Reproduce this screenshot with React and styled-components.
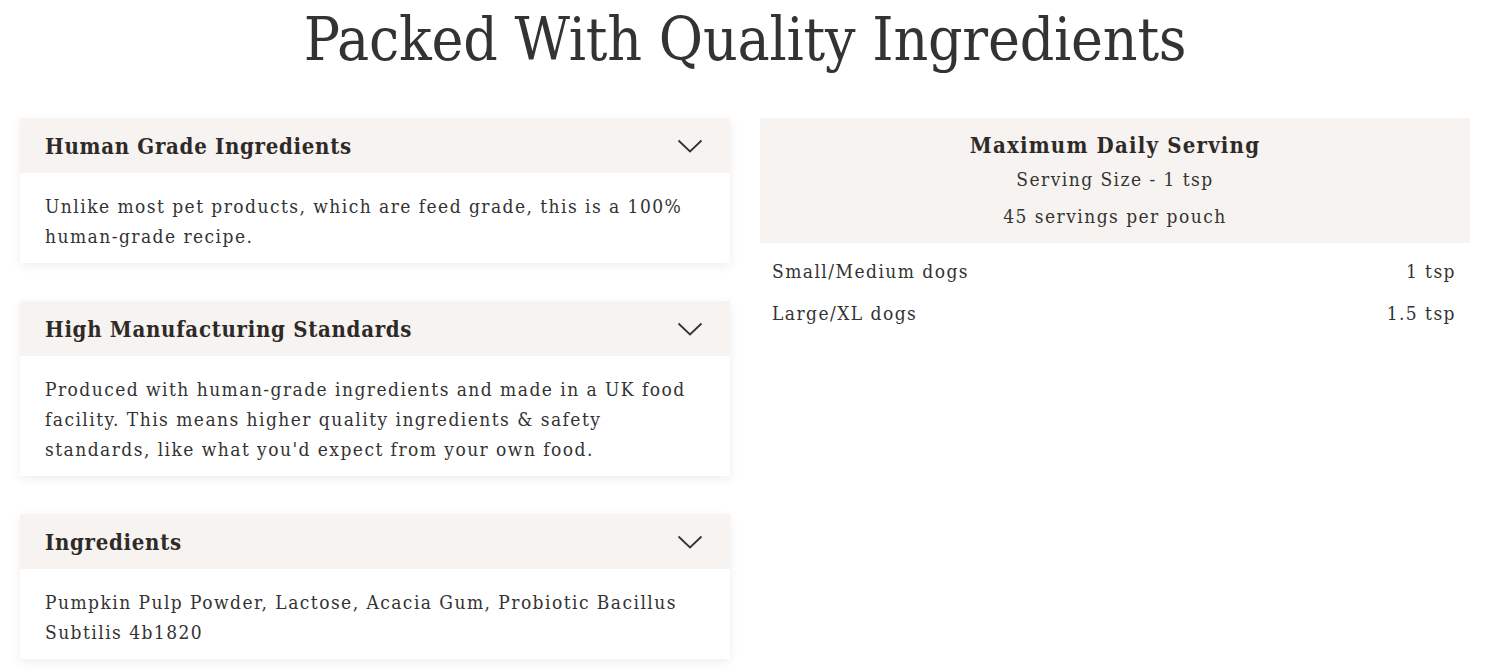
import React from "react";
import styled, { createGlobalStyle } from "styled-components";

const GlobalStyle = createGlobalStyle`
    body {
        margin: 0;
        background: #fff;
        font-family: "DejaVu Serif Condensed", "DejaVu Serif", serif;
        color: #333;
    }
`;

const Page = styled.div`
    width: 1501px;
    padding: 0 31px 20px 20px;
    box-sizing: border-box;
`;

const Heading = styled.h1`
    margin: 0;
    padding-top: 3px;
    height: 118px;
    box-sizing: border-box;
    text-align: center;
    font-size: 60px;
    font-weight: 400;
    letter-spacing: -0.2px;
    line-height: 72px;
    color: #333;
`;

const Columns = styled.div`
    display: grid;
    grid-template-columns: 710px 710px;
    column-gap: 30px;
    align-items: start;
`;

const Stack = styled.div`
    display: flex;
    flex-direction: column;
    gap: 38px;
`;

const Card = styled.div`
    background: #fff;
    box-shadow: 0 3px 10px rgba(0, 0, 0, 0.07);
`;

const CardHeader = styled.div`
    height: 55px;
    background: #f7f3f0;
    display: flex;
    align-items: center;
    justify-content: space-between;
    padding: 0 27px 0 25px;
`;

const CardTitle = styled.h3`
    margin: 0;
    font-size: 22px;
    font-weight: 700;
    letter-spacing: 0.7px;
    color: #2e2a28;
`;

const CardBody = styled.p`
    margin: 0;
    padding: 18px 25px 12px;
    font-size: 19px;
    line-height: 30px;
    letter-spacing: 1.45px;
    color: #333;
`;

const Chevron = () => (
    <svg width="26" height="14" viewBox="0 0 26 14" fill="none">
        <path d="M1.5 1.5 L13 12.5 L24.5 1.5" stroke="#333" strokeWidth="1.8" />
    </svg>
);

const ServingPanel = styled.div`
    display: flex;
    flex-direction: column;
`;

const ServingHead = styled.div`
    background: #f7f3f0;
    height: 125px;
    text-align: center;
    padding-top: 14px;
    box-sizing: border-box;
`;

const ServingTitle = styled.div`
    font-size: 22px;
    font-weight: 700;
    letter-spacing: 1.2px;
    line-height: 26px;
    color: #2e2a28;
`;

const ServingLine = styled.div`
    font-size: 19px;
    letter-spacing: 1.45px;
    line-height: 37px;
    margin-top: ${props => (props.first ? "3px" : "0")};
`;

const DoseList = styled.div`
    padding-top: 7px;
`;

const DoseRow = styled.div`
    display: flex;
    justify-content: space-between;
    padding: 0 14px 0 12px;
    font-size: 19px;
    letter-spacing: 1.45px;
    line-height: 42px;
`;

const cards = [
    {
        title: "Human Grade Ingredients",
        text: "Unlike most pet products, which are feed grade, this is a 100% human-grade recipe."
    },
    {
        title: "High Manufacturing Standards",
        text: "Produced with human-grade ingredients and made in a UK food facility. This means higher quality ingredients & safety standards, like what you'd expect from your own food."
    },
    {
        title: "Ingredients",
        text: "Pumpkin Pulp Powder, Lactose, Acacia Gum, Probiotic Bacillus Subtilis 4b1820"
    }
];

const doses = [
    { dog: "Small/Medium dogs", amount: "1 tsp" },
    { dog: "Large/XL dogs", amount: "1.5 tsp" }
];

export default function App() {
    return (
        <Page>
            <GlobalStyle />
            <Heading>Packed With Quality Ingredients</Heading>
            <Columns>
                <Stack>
                    {cards.map(card => (
                        <Card key={card.title}>
                            <CardHeader>
                                <CardTitle>{card.title}</CardTitle>
                                <Chevron />
                            </CardHeader>
                            <CardBody>{card.text}</CardBody>
                        </Card>
                    ))}
                </Stack>
                <ServingPanel>
                    <ServingHead>
                        <ServingTitle>Maximum Daily Serving</ServingTitle>
                        <ServingLine first>Serving Size - 1 tsp</ServingLine>
                        <ServingLine>45 servings per pouch</ServingLine>
                    </ServingHead>
                    <DoseList>
                        {doses.map(d => (
                            <DoseRow key={d.dog}>
                                <span>{d.dog}</span>
                                <span>{d.amount}</span>
                            </DoseRow>
                        ))}
                    </DoseList>
                </ServingPanel>
            </Columns>
        </Page>
    );
}
